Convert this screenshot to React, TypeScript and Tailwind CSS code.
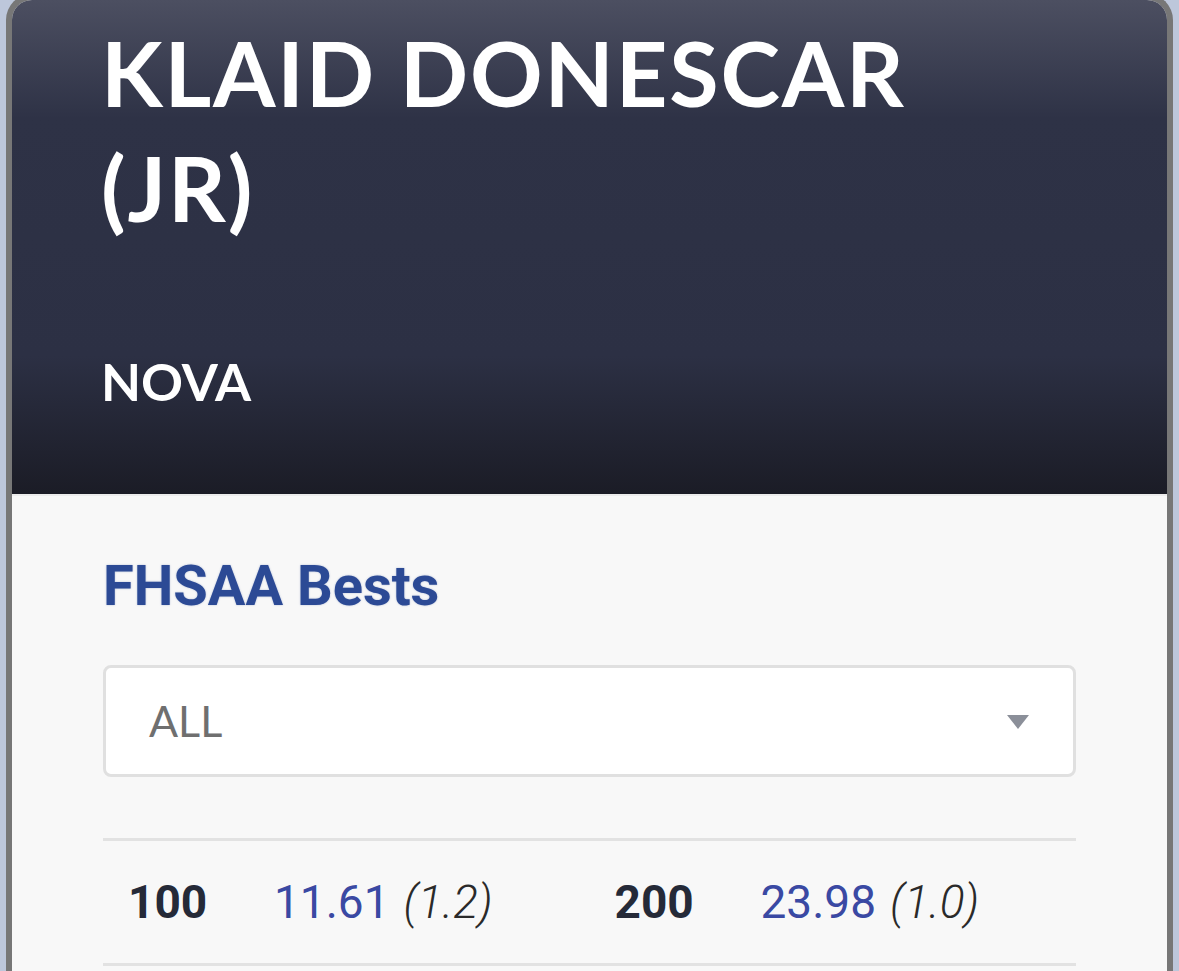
const bests = [
  { event: "100", mark: "11.61", wind: "(1.2)" },
  { event: "200", mark: "23.98", wind: "(1.0)" },
];

export default function App() {
  return (
    <div className="h-[971px] overflow-hidden bg-[#bdc7db] px-[6px]">
      <div className="-mt-[6px] h-[1000px] overflow-hidden rounded-t-[26px] border-x-[6px] border-t-[6px] border-[#777777] bg-[#f8f8f8]">
        {/* Athlete header */}
        <div className="h-[494px] bg-[linear-gradient(to_bottom,#4c4f61_0%,#2e3246_24%,#2c3044_72%,#1b1c26_100%)] pl-[89px] pt-[15px] text-white [font-family:Lato,sans-serif]">
          <h1 className="w-[950px] text-[90px] font-bold leading-[115px] tracking-[1.8px]">
            KLAID DONESCAR
            <br />
            (JR)
          </h1>
          <p className="mt-[110px] text-[52px] font-bold leading-none">NOVA</p>
        </div>
        <div className="h-[2px] bg-[#ececec]" />

        {/* Bests */}
        <div className="px-[91px] pt-[62px] [font-family:Roboto,sans-serif]">
          <h2 className="text-[56px] font-bold leading-none text-[#2c4a95] [text-shadow:0_0_2px_rgba(44,74,149,0.35)]">
            FHSAA Bests
          </h2>

          <div className="mt-[51px] flex h-[112px] items-center justify-between rounded-[8px] border-[3px] border-[#e0e0e0] bg-white pl-[43px] pr-[44px]">
            <span className="text-[43px] text-[#6f6f6f] [font-family:Lato,sans-serif]">ALL</span>
            <svg width="22" height="14" viewBox="0 0 22 14" className="mt-[2px]">
              <path d="M0 0h22L11 14z" fill="#8b8f99" />
            </svg>
          </div>

          <div className="mt-[61px] grid h-[128px] grid-cols-2 border-y-[3px] border-[#e2e2e2]">
            {bests.map((b) => (
              <div key={b.event} className="flex items-center pl-[25px] text-[46px]">
                <span className="w-[146px] font-bold text-[#252a38]">{b.event}</span>
                <span className="text-[#3a49a3]">{b.mark}</span>
                <span className="ml-[14px] font-light italic text-[#2a2a2a]">{b.wind}</span>
              </div>
            ))}
          </div>
        </div>
      </div>
    </div>
  );
}
